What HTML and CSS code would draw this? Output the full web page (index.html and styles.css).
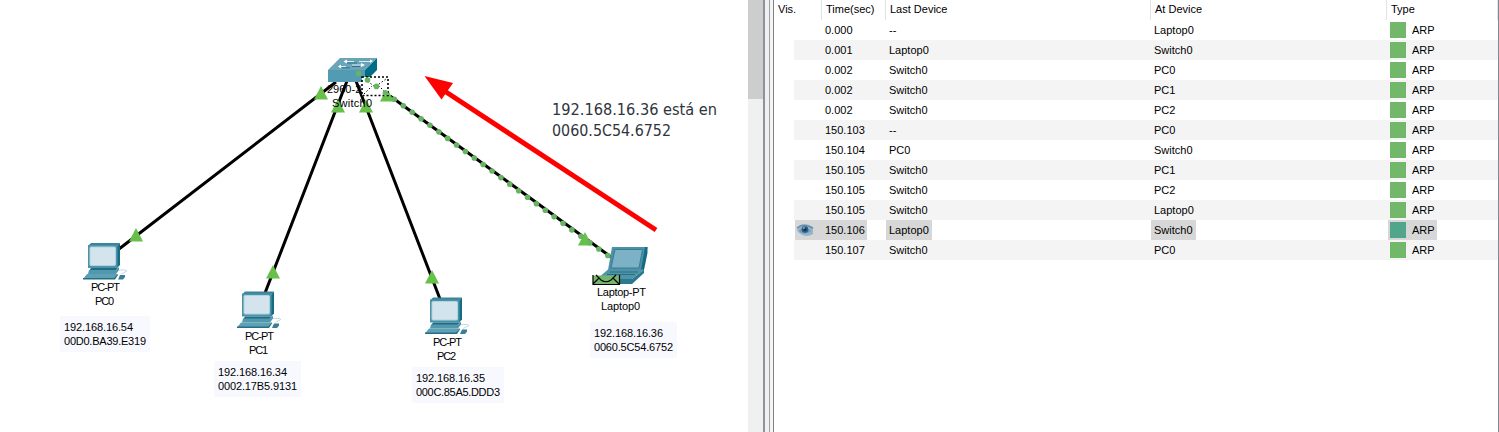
FILE: index.html
```html
<!DOCTYPE html>
<html lang="es">
<head>
<meta charset="utf-8">
<title>Simulation</title>
<link rel="stylesheet" href="styles.css">
</head>
<body>
<div class="app">
  <main class="workspace">
    <svg class="topology" width="748" height="432" viewBox="0 0 748 432">
      <defs>
        <g id="pc">
          <path d="M8 0H37L34 3H5Z" fill="#3b8497"/>
          <path d="M34 3L37 0V22L34 25Z" fill="#156c83"/>
          <rect x="5" y="2" width="29.500" height="23" fill="#4c93a9"/>
          <rect x="7" y="4" width="25.500" height="18.500" rx="1" fill="#d3e4ec" stroke="#b1d2df"/>
          <path d="M8 25H35L32 28H6Z" fill="#1d6e85"/>
          <path d="M6 27H33L36 24V27L33 31H5Z" fill="#5297ac"/>
          <path d="M4 31H35L31 36H0Z" fill="#5da1b6"/>
          <path d="M0 35H31L35 31V32L32 36.500H0Z" fill="#276f86"/>
          <path d="M37 32H42V34L40 36.500H35Z" fill="#397f93"/>
          <path d="M36 27H42L44 28L38 31" fill="none" stroke="#b8d1dc" stroke-width=".8"/>
        </g>
        <path id="up" d="M0 -7L7 6.500H-7Z" fill="#67c04a"/>
      </defs>

      <g class="links">
        <path d="M119 249L336 82M265 293L347 81M440 299L356 81M611 257L390 96"/>
      </g>

      <g>
        <path d="M328 70L340 58H377L365 70Z" fill="#69a4b7"/>
        <path d="M365 70L377 58V70L365 82Z" fill="#006c86"/>
        <rect x="328" y="70" width="37" height="12" fill="#539bb2"/>
        <path d="M346 61.500H354M359 61.500H370M340 66.500H346M352 65H362" stroke="#d9edf4" stroke-width="1.200"/>
        <path d="M343.500 61.500L347 59.500V63.500ZM370 59.500L373 61L370 63ZM341 64.500L338 66.500L341 68.500ZM361 63L365 65L361 67Z" fill="#fff"/>
        <path d="M347 63H357M342 67.800H350M352 66.500H360" stroke="#27677b" stroke-width=".8"/>
      </g>

      <use href="#pc" x="83" y="243"/>
      <use href="#pc" x="237" y="291.500"/>
      <use href="#pc" x="425" y="297.500"/>

      <g>
        <path d="M612 247H647.500L643 270H608Z" fill="#4e90a6"/>
        <path d="M647.500 247V253L644 270H641L645 247Z" fill="#156b83"/>
        <path d="M615 249.500H642.500L639 268H611Z" fill="#7db2c6" stroke="#347e95"/>
        <path d="M608 269.500H644L632 279H597Z" fill="#5194aa"/>
        <path d="M610 272H638M607 274.500H635" stroke="#276f85"/>
        <path d="M644 269.500V273L632 284H619V279H632Z" fill="#2b788f"/>
      </g>

      <use href="#up" x="321" y="93"/>
      <use href="#up" x="338" y="106"/>
      <use href="#up" x="366" y="106"/>
      <use href="#up" x="387" y="95"/>
      <use href="#up" x="136" y="235"/>
      <use href="#up" x="273" y="272"/>
      <use href="#up" x="432" y="277"/>
      <use href="#up" x="585" y="239"/>

      <g class="label">
        <text x="327" y="93">2960-2</text>
        <text x="332" y="107" textLength="40">Switch0</text>
        <text x="91" y="291" textLength="29">PC-PT</text>
        <text x="95" y="305" textLength="19">PC0</text>
        <text x="245" y="340" textLength="29">PC-PT</text>
        <text x="249" y="354" textLength="19">PC1</text>
        <text x="433" y="346" textLength="29">PC-PT</text>
        <text x="437" y="360" textLength="19">PC2</text>
        <text x="597" y="296" textLength="49">Laptop-PT</text>
        <text x="601" y="310" textLength="39">Laptop0</text>
      </g>

      <g fill="#f8f8ff">
        <rect x="60" y="316" width="90" height="36"/>
        <rect x="214" y="361" width="87" height="36"/>
        <rect x="412" y="367" width="92" height="36"/>
        <rect x="590" y="322" width="87" height="36"/>
      </g>
      <g class="label">
        <text x="64" y="331" textLength="69">192.168.16.54</text>
        <text x="64" y="345" textLength="82">00D0.BA39.E319</text>
        <text x="218" y="376" textLength="69">192.168.16.34</text>
        <text x="218" y="390" textLength="79">0002.17B5.9131</text>
        <text x="416" y="382" textLength="69">192.168.16.35</text>
        <text x="416" y="396" textLength="84">000C.85A5.DDD3</text>
        <text x="594" y="337" textLength="69">192.168.16.36</text>
        <text x="594" y="351" textLength="79">0060.5C54.6752</text>
      </g>

      <rect x="362" y="77" width="26" height="18.500" fill="#fff"/>
      <path d="M365 79L375 87L386 79M364 94L372 86M387 94L379 86" fill="none" stroke="#000" stroke-dasharray="1.500 2"/>
      <rect x="362" y="77" width="26" height="18.500" fill="none" stroke="#000" stroke-width="1.600" stroke-dasharray="2 2"/>

      <path class="packets" d="M358.600 73.500L403.300 105.700L572 230L610 257"/>

      <path d="M592.800 275.500H619.500V284.500H592.800Z" fill="#74b76a"/>
      <path d="M593 275V284.500H619.500V275M596 275L601 280Q606 283.500 611 280L616 275M593 284L599 278M619 284L613 278" fill="none" stroke="#000" stroke-width="1.200"/>

      <path d="M656 230L443 90" stroke="#f00" stroke-width="5"/>
      <path d="M424.500 76L453 83L441.500 99.500Z" fill="#f00"/>

      <g class="note">
        <text x="552" y="115" textLength="165" lengthAdjust="spacingAndGlyphs">192.168.16.36 está en</text>
        <text x="552" y="136" textLength="119" lengthAdjust="spacingAndGlyphs">0060.5C54.6752</text>
      </g>
    </svg>
  </main>

  <div class="scrollbar"><div class="thumb"></div></div>
  <div class="splitter"></div>

  <section class="events">
    <div class="row head"><span>Vis.</span><span>Time(sec)</span><span>Last Device</span><span>At Device</span><span>Type</span></div>
    <div class="row"><i></i><b>0.000</b><b>--</b><b>Laptop0</b><b class="type">ARP</b></div>
    <div class="row"><i></i><b>0.001</b><b>Laptop0</b><b>Switch0</b><b class="type">ARP</b></div>
    <div class="row"><i></i><b>0.002</b><b>Switch0</b><b>PC0</b><b class="type">ARP</b></div>
    <div class="row"><i></i><b>0.002</b><b>Switch0</b><b>PC1</b><b class="type">ARP</b></div>
    <div class="row"><i></i><b>0.002</b><b>Switch0</b><b>PC2</b><b class="type">ARP</b></div>
    <div class="row"><i></i><b>150.103</b><b>--</b><b>PC0</b><b class="type">ARP</b></div>
    <div class="row"><i></i><b>150.104</b><b>PC0</b><b>Switch0</b><b class="type">ARP</b></div>
    <div class="row"><i></i><b>150.105</b><b>Switch0</b><b>PC1</b><b class="type">ARP</b></div>
    <div class="row"><i></i><b>150.105</b><b>Switch0</b><b>PC2</b><b class="type">ARP</b></div>
    <div class="row"><i></i><b>150.105</b><b>Switch0</b><b>Laptop0</b><b class="type">ARP</b></div>
    <div class="row selected"><i><svg width="18" height="20" viewBox="0 0 18 20"><path d="M1 9Q3 4 8 4Q14 4 17 8V14Q10 18 5 14Q1 12 1 9Z" fill="#91b5cf"/><path d="M1 8Q7 3 17 8" fill="none" stroke="#628aaa" stroke-width="1.500"/><path d="M3 11Q8 4 15 11Q8 16 3 11Z" fill="#6f9abb"/><circle cx="9" cy="9.500" r="3.300" fill="#315978"/><circle cx="9" cy="9.500" r="1.400" fill="#142f47"/><circle cx="8" cy="8" r=".8" fill="#c8ddec"/></svg></i><b>150.106</b><b>Laptop0</b><b>Switch0</b><b class="type">ARP</b></div>
    <div class="row"><i></i><b>150.107</b><b>Switch0</b><b>PC0</b><b class="type">ARP</b></div>
  </section>
</div>
</body>
</html>
```
FILE: styles.css
```css
* { box-sizing: border-box; }
body {
  margin: 0;
  background: #fff;
  color: #000;
  font: 11px/20px "Liberation Sans", Arial, sans-serif;
}
.app {
  display: grid;
  grid-template-columns: 748px 15px 11px 1fr;
  height: 432px;
  overflow: hidden;
}
.topology { display: block; }
.links { stroke: #000; stroke-width: 3; fill: none; }
.label { font-size: 11px; fill: #000; }
.note { font: 16.5px "DejaVu Sans Condensed", "DejaVu Sans", sans-serif; fill: #30343c; }
.packets {
  fill: none;
  stroke: #69b463;
  stroke-width: 5.6;
  stroke-linecap: round;
  stroke-dasharray: 0 11.02;
}
.scrollbar { background: #f0f0f0; }
.thumb { height: 99px; background: #cdcdcd; }
.splitter {
  border-left: 2px solid #8e939b;
  border-right: 1px solid #7f8288;
  background: linear-gradient(90deg, #f0f0f0 4px, #a0a0a0 4px, #a0a0a0 5px, #f4f4f4 5px);
}
.events { border-right: 1px solid #838994; }
.row {
  display: grid;
  grid-template-columns: 47px 64px 265px 236px 1fr;
  height: 20px;
}
.row:nth-child(odd) { background: linear-gradient(90deg, #fff 20px, #f4f4f4 20px); }
.row.head {
  grid-template-columns: 48px 64px 265px 236px 1fr;
  background: #fff;
}
.head span {
  padding-left: 4px;
  line-height: 19px;
  border-right: 1px solid #e2e2e2;
}
.row b {
  justify-self: start;
  margin-left: 1px;
  padding: 0 3px;
  font-weight: normal;
  height: 20px;
}
.row b:nth-child(2) { margin-left: 0; padding: 0 2px 0 4px; }
.row i { display: block; margin-left: 21px; width: 26px; }
.row i svg { display: block; margin-left: 1px; }
.row .type {
  display: flex;
  align-items: center;
  gap: 6px;
  margin-left: 2px;
  padding: 0 2px;
}
.type::before { content: ""; width: 16px; height: 16px; background: #72b76a; }
.row.selected { background: #fff; }
.selected b, .selected i { background: #d7d7d7; }
.selected .type::before { background: #50a58b; }
```
